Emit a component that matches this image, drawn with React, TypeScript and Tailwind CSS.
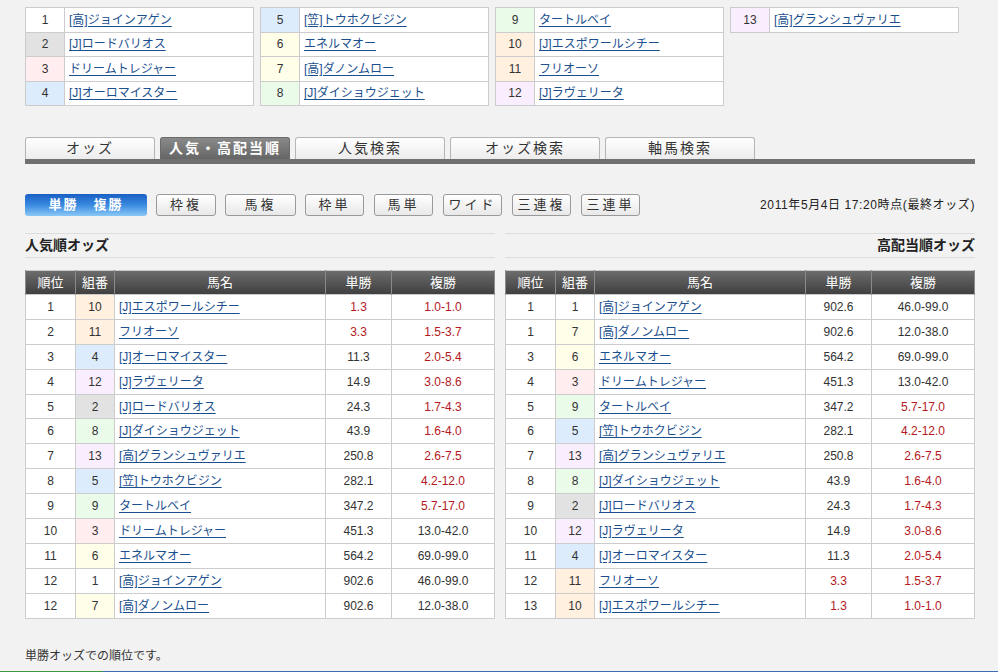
import React from 'react';

type Horse = { no: number; name: string; win: string; place: string };

const horses: Horse[] = [
  { no: 1, name: '[高]ジョインアゲン', win: '902.6', place: '46.0-99.0' },
  { no: 2, name: '[J]ロードバリオス', win: '24.3', place: '1.7-4.3' },
  { no: 3, name: 'ドリームトレジャー', win: '451.3', place: '13.0-42.0' },
  { no: 4, name: '[J]オーロマイスター', win: '11.3', place: '2.0-5.4' },
  { no: 5, name: '[笠]トウホクビジン', win: '282.1', place: '4.2-12.0' },
  { no: 6, name: 'エネルマオー', win: '564.2', place: '69.0-99.0' },
  { no: 7, name: '[高]ダノンムロー', win: '902.6', place: '12.0-38.0' },
  { no: 8, name: '[J]ダイショウジェット', win: '43.9', place: '1.6-4.0' },
  { no: 9, name: 'タートルベイ', win: '347.2', place: '5.7-17.0' },
  { no: 10, name: '[J]エスポワールシチー', win: '1.3', place: '1.0-1.0' },
  { no: 11, name: 'フリオーソ', win: '3.3', place: '1.5-3.7' },
  { no: 12, name: '[J]ラヴェリータ', win: '14.9', place: '3.0-8.6' },
  { no: 13, name: '[高]グランシュヴァリエ', win: '250.8', place: '2.6-7.5' },
];

const gateBg: Record<number, string> = {
  1: 'bg-white',
  2: 'bg-[#e2e2e2]',
  3: 'bg-[#ffedf0]',
  4: 'bg-[#dcecfd]',
  5: 'bg-[#dcecfd]',
  6: 'bg-[#fffee8]',
  7: 'bg-[#fffee8]',
  8: 'bg-[#eafbea]',
  9: 'bg-[#eafbea]',
  10: 'bg-[#fff0e0]',
  11: 'bg-[#fff0e0]',
  12: 'bg-[#f9eefd]',
  13: 'bg-[#f9eefd]',
};

const popularOrder: [number, number][] = [
  [1, 10], [2, 11], [3, 4], [4, 12], [5, 2], [6, 8], [7, 13],
  [8, 5], [9, 9], [10, 3], [11, 6], [12, 1], [12, 7],
];

const highOrder: [number, number][] = [
  [1, 1], [1, 7], [3, 6], [4, 3], [5, 9], [6, 5], [7, 13],
  [8, 8], [9, 2], [10, 12], [11, 4], [12, 11], [13, 10],
];

const byNo = (no: number) => horses.find((h) => h.no === no)!;

function isRed(value: string) {
  return parseFloat(value) < 10;
}

function HorseLink({ name }: { name: string }) {
  return <a href="#" className="text-[#1b4f8e] underline underline-offset-2">{name}</a>;
}

function EntryTable({ list }: { list: Horse[] }) {
  return (
    <table className="w-[229px] table-fixed border-collapse self-start bg-white text-[12px]">
      <colgroup>
        <col className="w-[39px]" />
        <col />
      </colgroup>
      <tbody>
        {list.map((h) => (
          <tr key={h.no}>
            <td className={`h-[24.5px] border border-[#cccccc] text-center ${gateBg[h.no]}`}>{h.no}</td>
            <td className="h-[24.5px] truncate border border-[#cccccc] pl-[4px]">
              <HorseLink name={h.name} />
            </td>
          </tr>
        ))}
      </tbody>
    </table>
  );
}

const tabs = [
  { label: 'オッズ', w: 'w-[130px]' },
  { label: '人気・高配当順', w: 'w-[130px]', active: true },
  { label: '人気検索', w: 'w-[150px]' },
  { label: 'オッズ検索', w: 'w-[150px]' },
  { label: '軸馬検索', w: 'w-[150px]' },
];

const betButtons = [
  { label: '枠複', cls: 'ml-[9px] w-[60px]' },
  { label: '馬複', cls: 'ml-[9px] w-[71px]' },
  { label: '枠単', cls: 'ml-[9px] w-[59px]' },
  { label: '馬単', cls: 'ml-[10px] w-[59px]' },
  { label: 'ワイド', cls: 'ml-[10px] w-[59px]' },
  { label: '三連複', cls: 'ml-[10px] w-[59px]' },
  { label: '三連単', cls: 'ml-[10px] w-[59px]' },
];

function OddsTable({ rows }: { rows: [number, number][] }) {
  const th = 'h-[24px] border-x border-[#8a8a8a] text-[13px] font-normal text-white';
  return (
    <table className="w-[470px] table-fixed border-collapse border border-[#c8c8c8] bg-white text-[12px]">
      <colgroup>
        <col className="w-[50px]" />
        <col className="w-[39px]" />
        <col className="w-[211px]" />
        <col className="w-[66px]" />
        <col />
      </colgroup>
      <thead>
        <tr className="bg-gradient-to-b from-[#6c6c6c] to-[#3e3e3e]">
          <th className={th}>順位</th>
          <th className={th}>組番</th>
          <th className={th}>馬名</th>
          <th className={th}>単勝</th>
          <th className={th}>複勝</th>
        </tr>
      </thead>
      <tbody>
        {rows.map(([rank, no], i) => {
          const h = byNo(no);
          const cell = 'h-[24.9px] border border-[#cccccc] text-center';
          return (
            <tr key={i} className="text-[#333333]">
              <td className={cell}>{rank}</td>
              <td className={`${cell} ${gateBg[no]}`}>{no}</td>
              <td className="h-[24.9px] truncate border border-[#cccccc] pl-[4px]">
                <HorseLink name={h.name} />
              </td>
              <td className={`${cell} ${isRed(h.win) ? 'text-[#b3191e]' : ''}`}>{h.win}</td>
              <td className={`${cell} ${isRed(h.place) ? 'text-[#b3191e]' : ''}`}>{h.place}</td>
            </tr>
          );
        })}
      </tbody>
    </table>
  );
}

function SectionTitle({ text, right = false }: { text: string; right?: boolean }) {
  return (
    <div
      className={`flex h-[25px] items-center border-y border-[#dddddd] text-[14px] font-bold text-[#222222] ${
        right ? 'justify-end' : ''
      }`}
    >
      {text}
    </div>
  );
}

export default function App() {
  return (
    <div className="flex h-[672px] flex-col bg-[#f2f2f2] font-['Liberation_Sans','Noto_Sans_CJK_JP',sans-serif] text-[#333333]">
      <div className="ml-[25px] w-[950px] flex-1 pt-[7px]">
        <div className="flex gap-[6px]">
          <EntryTable list={horses.slice(0, 4)} />
          <EntryTable list={horses.slice(4, 8)} />
          <EntryTable list={horses.slice(8, 12)} />
          <EntryTable list={horses.slice(12)} />
        </div>

        <div className="mt-[31px]">
          <div className="flex gap-[5px]">
            {tabs.map((t) => (
              <div
                key={t.label}
                className={`flex h-[22px] items-center justify-center rounded-t-[3px] border border-b-0 text-[14px] ${t.w} ${
                  t.active
                    ? 'border-[#6a6a6a] bg-gradient-to-b from-[#8a8a8a] to-[#666666] font-bold text-white'
                    : 'border-[#b5b5b5] bg-gradient-to-b from-white to-[#ececec] text-[#333333]'
                }`}
              >
                <span className="tracking-[2px]">{t.label}</span>
              </div>
            ))}
          </div>
          <div className="h-[5px] bg-[#707070]" />
        </div>

        <div className="mt-[30px] flex h-[22px] items-center">
          <div className="flex h-[22px] w-[122px] items-center justify-center rounded-[3px] bg-gradient-to-b from-[#1a5fc4] via-[#3a8ae0] to-[#8ac8f5] text-[13px] font-bold tracking-[2px] text-white">
            単勝　複勝
          </div>
          {betButtons.map((b) => (
            <div
              key={b.label}
              className={`flex h-[22px] items-center justify-center rounded-[3px] border border-[#9a9a9a] bg-gradient-to-b from-white to-[#e8e8e8] text-[13px] tracking-[3px] text-[#333333] ${b.cls}`}
            >
              {b.label}
            </div>
          ))}
          <div className="ml-auto text-[12px] tracking-[0.6px] text-[#222222]">2011年5月4日 17:20時点(最終オッズ)</div>
        </div>

        <div className="mt-[17px] flex justify-between">
          <div className="w-[470px]">
            <SectionTitle text="人気順オッズ" />
            <div className="mt-[12px]">
              <OddsTable rows={popularOrder} />
            </div>
          </div>
          <div className="w-[470px]">
            <SectionTitle text="高配当順オッズ" right />
            <div className="mt-[12px]">
              <OddsTable rows={highOrder} />
            </div>
          </div>
        </div>

        <p className="mt-[29px] text-[12px] leading-[16px] text-[#333333]">単勝オッズでの順位です。</p>
      </div>
      <div className="flex h-px">
        <div className="w-[103px] bg-[#3c9a3c]" />
        <div className="flex-1 bg-[#3c6cb4]" />
      </div>
    </div>
  );
}
